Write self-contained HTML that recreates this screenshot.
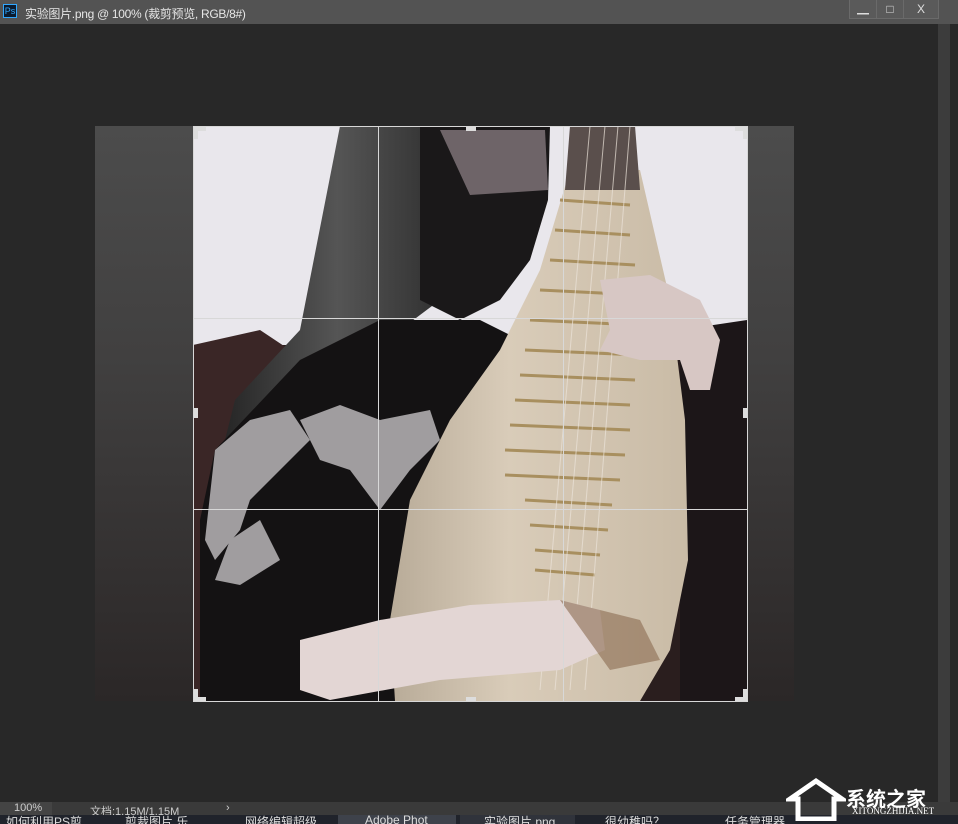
<!DOCTYPE html>
<html><head><meta charset="utf-8"><style>
html,body{margin:0;padding:0;width:958px;height:824px;overflow:hidden;background:#282828;font-family:"Liberation Sans","Noto Sans CJK SC",sans-serif;}
.title{position:absolute;left:0;top:0;width:958px;height:24px;background:#535353;color:#e6e6e6;font-size:12px;}
.title .ps{position:absolute;left:3px;top:4px;width:14px;height:14px;background:#0b1b2e;border:1px solid #31a8ff;color:#31a8ff;font-size:9px;line-height:12px;text-align:center;box-sizing:border-box}
.title .t{position:absolute;left:25px;top:5px;letter-spacing:-0.3px}
.btn{position:absolute;top:0;height:18px;border:1px solid #6a6a6a;border-top:none;background:#5a5a5a;color:#ddd;font-size:12px;text-align:center;line-height:18px}
.sb{position:absolute;left:938px;top:24px;width:12px;height:778px;background:#3c3c3c}
.status{position:absolute;left:0;top:802px;width:958px;height:14px;background:#3a3a3a;color:#ccc;font-size:11px}
.task{position:absolute;left:0;top:815px;width:958px;height:9px;background:#20232b;color:#ddd;font-size:12px;overflow:hidden}
</style></head><body>
<div class="title"><div class="ps">Ps</div><div class="t">实验图片.png @ 100% (裁剪预览, RGB/8#)</div>
<div class="btn" style="left:849px;width:26px">▁</div><div class="btn" style="left:876px;width:26px">□</div><div class="btn" style="left:903px;width:34px">X</div></div>
<div class="sb"></div>
<svg width="958" height="824" style="position:absolute;left:0;top:0">
<defs>
<linearGradient id="dim" x1="0" x2="0" y1="0" y2="1"><stop offset="0" stop-color="#4c4c4c"/><stop offset=".4" stop-color="#414040"/><stop offset="1" stop-color="#2b2727"/></linearGradient>
<linearGradient id="pipa" x1="0" x2="1"><stop offset="0" stop-color="#b8ab98"/><stop offset=".4" stop-color="#d9ccb9"/><stop offset="1" stop-color="#c9bba6"/></linearGradient>
<linearGradient id="hair" x1="0" x2="1"><stop offset="0" stop-color="#222"/><stop offset=".5" stop-color="#555"/><stop offset="1" stop-color="#2a2a2a"/></linearGradient>
</defs>
<rect x="95" y="126" width="699" height="575" fill="url(#dim)"/>
<rect x="193" y="126" width="554" height="575" fill="#e9e7ec"/>
<rect x="193" y="345" width="554" height="356" fill="#2a1e1e"/>
<path d="M193 345 L260 330 L290 350 L290 701 L193 701Z" fill="#3a2626"/>
<path d="M680 330 L747 320 L747 701 L680 701Z" fill="#1c1618"/>
<path d="M340 126 L430 126 L460 160 L440 300 L360 360 L280 420 L215 480 L235 400 L300 330 Z" fill="url(#hair)"/>
<path d="M420 126 L550 126 L548 200 L530 260 L500 300 L460 320 L420 300 Z" fill="#1a1819"/>
<path d="M440 130 L545 130 L548 190 L470 195 Z" fill="#6e6468"/>
<path d="M215 450 L300 360 L380 320 L480 320 L520 340 L560 380 L560 701 L200 701 L200 520 Z" fill="#141213"/>
<g fill="#b9b6b8" opacity=".85">
<path d="M215 450 L250 420 L290 410 L310 440 L280 470 L250 500 L240 530 L215 560 L205 540 Z"/>
<path d="M300 420 L340 405 L380 420 L430 410 L440 440 L410 470 L380 510 L350 470 L320 460 Z"/>
<path d="M230 540 L260 520 L280 560 L240 585 L215 580 Z"/>
</g>
<path d="M570 170 L640 170 L670 300 L685 420 L688 560 L670 650 L640 701 L395 701 L390 620 L410 500 L450 420 L500 350 L540 270 Z" fill="url(#pipa)"/>
<path d="M570 126 L635 126 L640 190 L565 190 Z" fill="#5a4f4c"/>
<g stroke="#a88f5f" stroke-width="3">
<line x1="560" y1="200" x2="630" y2="205"/><line x1="555" y1="230" x2="630" y2="235"/><line x1="550" y1="260" x2="635" y2="265"/><line x1="540" y1="290" x2="640" y2="295"/><line x1="530" y1="320" x2="640" y2="325"/><line x1="525" y1="350" x2="640" y2="355"/><line x1="520" y1="375" x2="635" y2="380"/><line x1="515" y1="400" x2="630" y2="405"/><line x1="510" y1="425" x2="630" y2="430"/><line x1="505" y1="450" x2="625" y2="455"/><line x1="505" y1="475" x2="620" y2="480"/><line x1="525" y1="500" x2="612" y2="505"/><line x1="530" y1="525" x2="608" y2="530"/><line x1="535" y1="550" x2="600" y2="555"/><line x1="535" y1="570" x2="595" y2="575"/>
</g>
<g stroke="#ece4da" stroke-width="1" opacity=".7"><line x1="590" y1="126" x2="540" y2="690"/><line x1="605" y1="126" x2="555" y2="690"/><line x1="618" y1="126" x2="570" y2="690"/><line x1="630" y1="126" x2="585" y2="690"/></g>
<path d="M600 280 L650 275 L700 300 L720 340 L710 390 L690 390 L680 360 L640 360 L600 350 L610 330 Z" fill="#d7c7c4"/>
<path d="M300 640 L380 620 L470 605 L560 600 L600 610 L605 650 L560 670 L440 680 L330 700 L300 690 Z" fill="#e3d6d4"/>
<path d="M560 600 L640 620 L660 660 L610 670 Z" fill="#8a6a50" opacity=".6"/>
<g stroke="#d8d8d8" stroke-width="1" fill="none">
<rect x="193.5" y="126.5" width="554" height="575"/>
<line x1="378.5" y1="126" x2="378.5" y2="701"/><line x1="563.5" y1="126" x2="563.5" y2="701"/>
<line x1="193" y1="318.5" x2="747" y2="318.5"/><line x1="193" y1="509.5" x2="747" y2="509.5"/>
</g>
<g fill="#ddd"><rect x="194" y="127" width="12" height="4"/><rect x="194" y="127" width="4" height="12"/><rect x="735" y="127" width="12" height="4"/><rect x="743" y="127" width="4" height="12"/><rect x="194" y="697" width="12" height="4"/><rect x="194" y="689" width="4" height="12"/><rect x="735" y="697" width="12" height="4"/><rect x="743" y="689" width="4" height="12"/><rect x="466" y="127" width="10" height="4"/><rect x="466" y="697" width="10" height="4"/><rect x="194" y="408" width="4" height="10"/><rect x="743" y="408" width="4" height="10"/></g>
</svg>
<div class="status"><span style="position:absolute;left:0;top:0;width:52px;height:14px;background:#444;padding-left:14px;box-sizing:border-box">100%</span><span style="position:absolute;left:90px;top:1px">文档:1.15M/1.15M</span><span style="position:absolute;left:226px;top:0">›</span></div>
<div class="task"><span style="position:absolute;left:6px;top:-2px">如何利用PS剪</span><span style="position:absolute;left:125px;top:-2px">剪裁图片 乐</span><span style="position:absolute;left:245px;top:-2px">网络编辑超级</span><span style="position:absolute;left:338px;top:0;width:118px;height:9px;background:#3e424b"></span><span style="position:absolute;left:365px;top:-2px">Adobe Phot</span><span style="position:absolute;left:460px;top:0;width:115px;height:9px;background:#30333b"></span><span style="position:absolute;left:484px;top:-2px">实验图片.png</span><span style="position:absolute;left:605px;top:-2px">很幼稚吗？</span><span style="position:absolute;left:725px;top:-2px">任务管理器</span></div>
<div style="position:absolute;left:846px;top:783px;color:#fff;font-size:20px;font-weight:bold;font-family:'Noto Sans CJK SC',sans-serif">系统之家</div>
<div style="position:absolute;left:852px;top:806px;color:#fff;font-size:9px;font-family:'Liberation Serif',serif">XITONGZHIJIA.NET</div>
<svg width="60" height="44" style="position:absolute;left:786px;top:777px"><path d="M4 22 L30 4 L56 22 L48 22 L48 42 L12 42 L12 22Z" fill="none" stroke="#fff" stroke-width="5"/></svg>
</body></html>
